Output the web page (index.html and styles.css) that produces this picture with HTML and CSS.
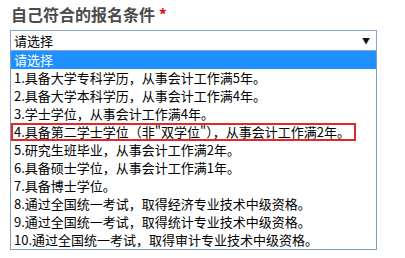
FILE: index.html
```html
<!DOCTYPE html>
<html lang="zh-CN">
<head>
  <meta charset="UTF-8" />
  <title>报名条件</title>
  <link rel="stylesheet" href="styles.css">
</head>
<body>

  <!-- 报名条件 下拉框 -->
  <div class="field">
    <div class="field-title">自己符合的报名条件 <span class="required">*</span></div>

    <div class="select-box">
      <span>请选择</span>
      <i class="select-arrow">▼</i>
    </div>

    <ul class="option-list">
      <li class="option selected">请选择</li>
      <li class="option">1.具备大学专科学历，从事会计工作满5年。</li>
      <li class="option">2.具备大学本科学历，从事会计工作满4年。</li>
      <li class="option">3.学士学位，从事会计工作满4年。</li>
      <li class="option marked"><span class="mark">4.具备第二学士学位（非"双学位"），从事会计工作满2年。</span></li>
      <li class="option">5.研究生班毕业，从事会计工作满2年。</li>
      <li class="option">6.具备硕士学位，从事会计工作满1年。</li>
      <li class="option">7.具备博士学位。</li>
      <li class="option">8.通过全国统一考试，取得经济专业技术中级资格。</li>
      <li class="option">9.通过全国统一考试，取得统计专业技术中级资格。</li>
      <li class="option">10.通过全国统一考试，取得审计专业技术中级资格。</li>
    </ul>
  </div>

</body>
</html>
```

FILE: styles.css
```css
body {
  margin: 0;
  padding: 0;
  background-color: #fff;
  font-family: "Noto Sans CJK SC", "Noto Sans", sans-serif;
  color: #000;
}

.field {
  padding: 3px 0 0 10px;
}

.field-title {
  font-size: 16px;
  font-weight: bold;
  color: #4a4a4a;
  line-height: 22px;
  height: 27px;
  padding-left: 1px;
}

.required {
  color: #e0141e;
  font-size: 16px;
}

/* suljettu valikko */
.select-box {
  width: 367px;
  height: 21px;
  box-sizing: border-box;
  border: 1px solid #8aa4d0;
  display: flex;
  align-items: center;
  justify-content: space-between;
  padding: 0 6px 0 3px;
  font-size: 13px;
  line-height: 19px;
}

.select-arrow {
  font-style: normal;
  font-size: 8px;
  color: #111;
}

.option-list {
  list-style: none;
  margin: 0;
  padding: 0;
  width: 367px;
  box-sizing: border-box;
  border: 1px solid #7f9db9;
  border-top: none;
}

.option {
  height: 18px;
  line-height: 18px;
  font-size: 13px;
  padding-left: 3px;
  white-space: nowrap;
}

.option.selected {
  background-color: #1e90ff;
  color: #fff;
}

.option.marked {
  padding-left: 0;
}

.mark {
  display: inline-block;
  box-sizing: border-box;
  width: 345px;
  height: 18px;
  line-height: 14px;
  border: 2px solid #e0282c;
  padding-left: 1px;
}
```
